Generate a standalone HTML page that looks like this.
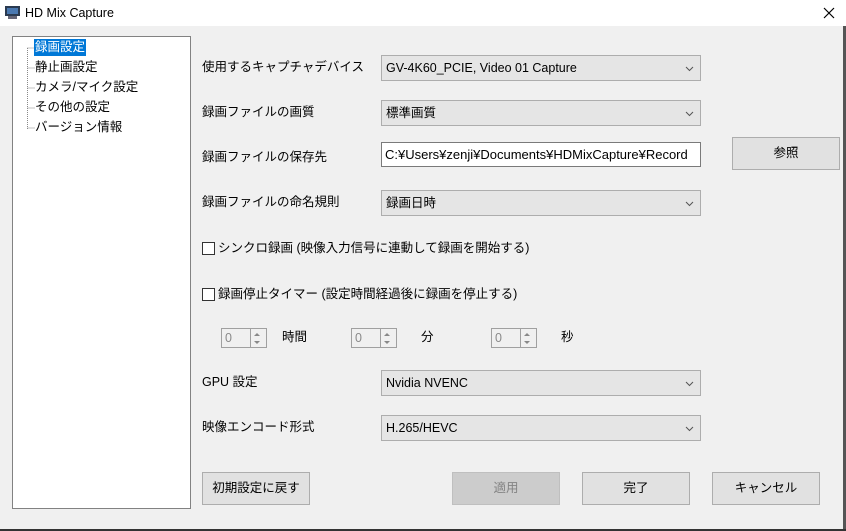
<!DOCTYPE html>
<html><head><meta charset="utf-8"><style>
*{box-sizing:border-box;margin:0;padding:0}
body{width:846px;height:531px;background:#f0f0f0;font-family:"Liberation Sans","Noto Sans CJK JP",sans-serif;font-size:12.5px;color:#000;position:relative;overflow:hidden}
.a{position:absolute}
.title{left:0;top:0;width:846px;height:26px;background:#fff}
.tree{left:12px;top:36px;width:179px;height:473px;background:#fff;border:1px solid #828282}
.lbl{position:absolute;line-height:14px;white-space:nowrap}
.combo{position:absolute;left:381px;width:320px;height:26px;background:#e5e5e5;border:1px solid #adadad;padding-left:4px;line-height:24px}
.combo svg{position:absolute;right:6px;top:10px}
.btn{position:absolute;height:33px;background:#e1e1e1;border:1px solid #adadad;text-align:center;line-height:31px}
.cb{position:absolute;left:202px;width:13px;height:13px;border:1px solid #333;background:#fff}
.spin{position:absolute;width:46px;height:20px;border:1px solid #a0a0a0;background:#f0f0f0;color:#8a8a8a;padding-left:3px;line-height:18px}
.spin:after{content:"";position:absolute;left:28px;top:0;height:18px;border-left:1px solid #a0a0a0}
.spin i{position:absolute;left:32px;width:0;height:0;border-left:3px solid transparent;border-right:3px solid transparent}
</style></head><body>
<div class="a title"></div>
<svg class="a" style="left:5px;top:6px" width="16" height="13"><rect x="0" y="0" width="15" height="10" fill="#2a3a50"/><rect x="2" y="2" width="11" height="6" fill="#4a78b0"/><rect x="3" y="10" width="9" height="3" fill="#667"/></svg>
<div class="lbl" style="left:25px;top:6px;font-size:12.5px">HD Mix Capture</div>
<svg class="a" style="left:823px;top:7px" width="12" height="12"><path d="M1 1L11 11M11 1L1 11" stroke="#000" stroke-width="1.2"/></svg>
<div class="a" style="left:843px;top:26px;width:3px;height:505px;background:#555"></div>
<div class="a" style="left:0;top:529px;width:846px;height:2px;background:#333"></div>
<div class="a tree">
<svg class="a" style="left:0;top:0" width="30" height="110"><path d="M14.5 11V92M14.5 11H22M14.5 31H22M14.5 51H22M14.5 71H22M14.5 91H22" stroke="#888" stroke-dasharray="1 1" fill="none"/></svg>
<div class="lbl" style="left:21px;top:2px;background:#0078d7;color:#fff;padding:0 1px;height:17px;line-height:17px">録画設定</div>
<div class="lbl" style="left:22px;top:23px">静止画設定</div>
<div class="lbl" style="left:22px;top:43px">カメラ/マイク設定</div>
<div class="lbl" style="left:22px;top:63px">その他の設定</div>
<div class="lbl" style="left:22px;top:83px">バージョン情報</div>
</div>
<div class="lbl" style="left:202px;top:60px">使用するキャプチャデバイス</div>
<div class="combo" style="top:55px">GV-4K60_PCIE, Video 01 Capture<svg width="9" height="6"><path d="M1 1L4.5 4.5L8 1" stroke="#555" fill="none"/></svg></div>
<div class="lbl" style="left:202px;top:105px">録画ファイルの画質</div>
<div class="combo" style="top:100px">標準画質<svg width="9" height="6"><path d="M1 1L4.5 4.5L8 1" stroke="#555" fill="none"/></svg></div>
<div class="lbl" style="left:202px;top:150px">録画ファイルの保存先</div>
<div class="combo" style="top:142px;background:#fff;border-color:#7a7a7a;height:25px;line-height:23px;padding-left:3px;font-size:13px">C:¥Users¥zenji¥Documents¥HDMixCapture¥Record</div>
<div class="btn" style="left:732px;top:137px;width:108px">参照</div>
<div class="lbl" style="left:202px;top:195px">録画ファイルの命名規則</div>
<div class="combo" style="top:190px">録画日時<svg width="9" height="6"><path d="M1 1L4.5 4.5L8 1" stroke="#555" fill="none"/></svg></div>
<div class="cb" style="top:242px"></div>
<div class="lbl" style="left:218px;top:241px">シンクロ録画 (映像入力信号に連動して録画を開始する)</div>
<div class="cb" style="top:288px"></div>
<div class="lbl" style="left:218px;top:287px">録画停止タイマー (設定時間経過後に録画を停止する)</div>
<div class="spin" style="left:221px;top:328px">0<i style="top:4px;border-bottom:3px solid #888"></i><i style="top:12px;border-top:3px solid #888"></i></div>
<div class="lbl" style="left:282px;top:330px">時間</div>
<div class="spin" style="left:351px;top:328px">0<i style="top:4px;border-bottom:3px solid #888"></i><i style="top:12px;border-top:3px solid #888"></i></div>
<div class="lbl" style="left:421px;top:330px">分</div>
<div class="spin" style="left:491px;top:328px">0<i style="top:4px;border-bottom:3px solid #888"></i><i style="top:12px;border-top:3px solid #888"></i></div>
<div class="lbl" style="left:561px;top:330px">秒</div>
<div class="lbl" style="left:202px;top:375px">GPU 設定</div>
<div class="combo" style="top:370px">Nvidia NVENC<svg width="9" height="6"><path d="M1 1L4.5 4.5L8 1" stroke="#555" fill="none"/></svg></div>
<div class="lbl" style="left:202px;top:420px">映像エンコード形式</div>
<div class="combo" style="top:415px">H.265/HEVC<svg width="9" height="6"><path d="M1 1L4.5 4.5L8 1" stroke="#555" fill="none"/></svg></div>
<div class="btn" style="left:202px;top:472px;width:108px">初期設定に戻す</div>
<div class="btn" style="left:452px;top:472px;width:108px;background:#cccccc;border-color:#bfbfbf;color:#838383">適用</div>
<div class="btn" style="left:582px;top:472px;width:108px">完了</div>
<div class="btn" style="left:712px;top:472px;width:108px">キャンセル</div>
</body></html>
